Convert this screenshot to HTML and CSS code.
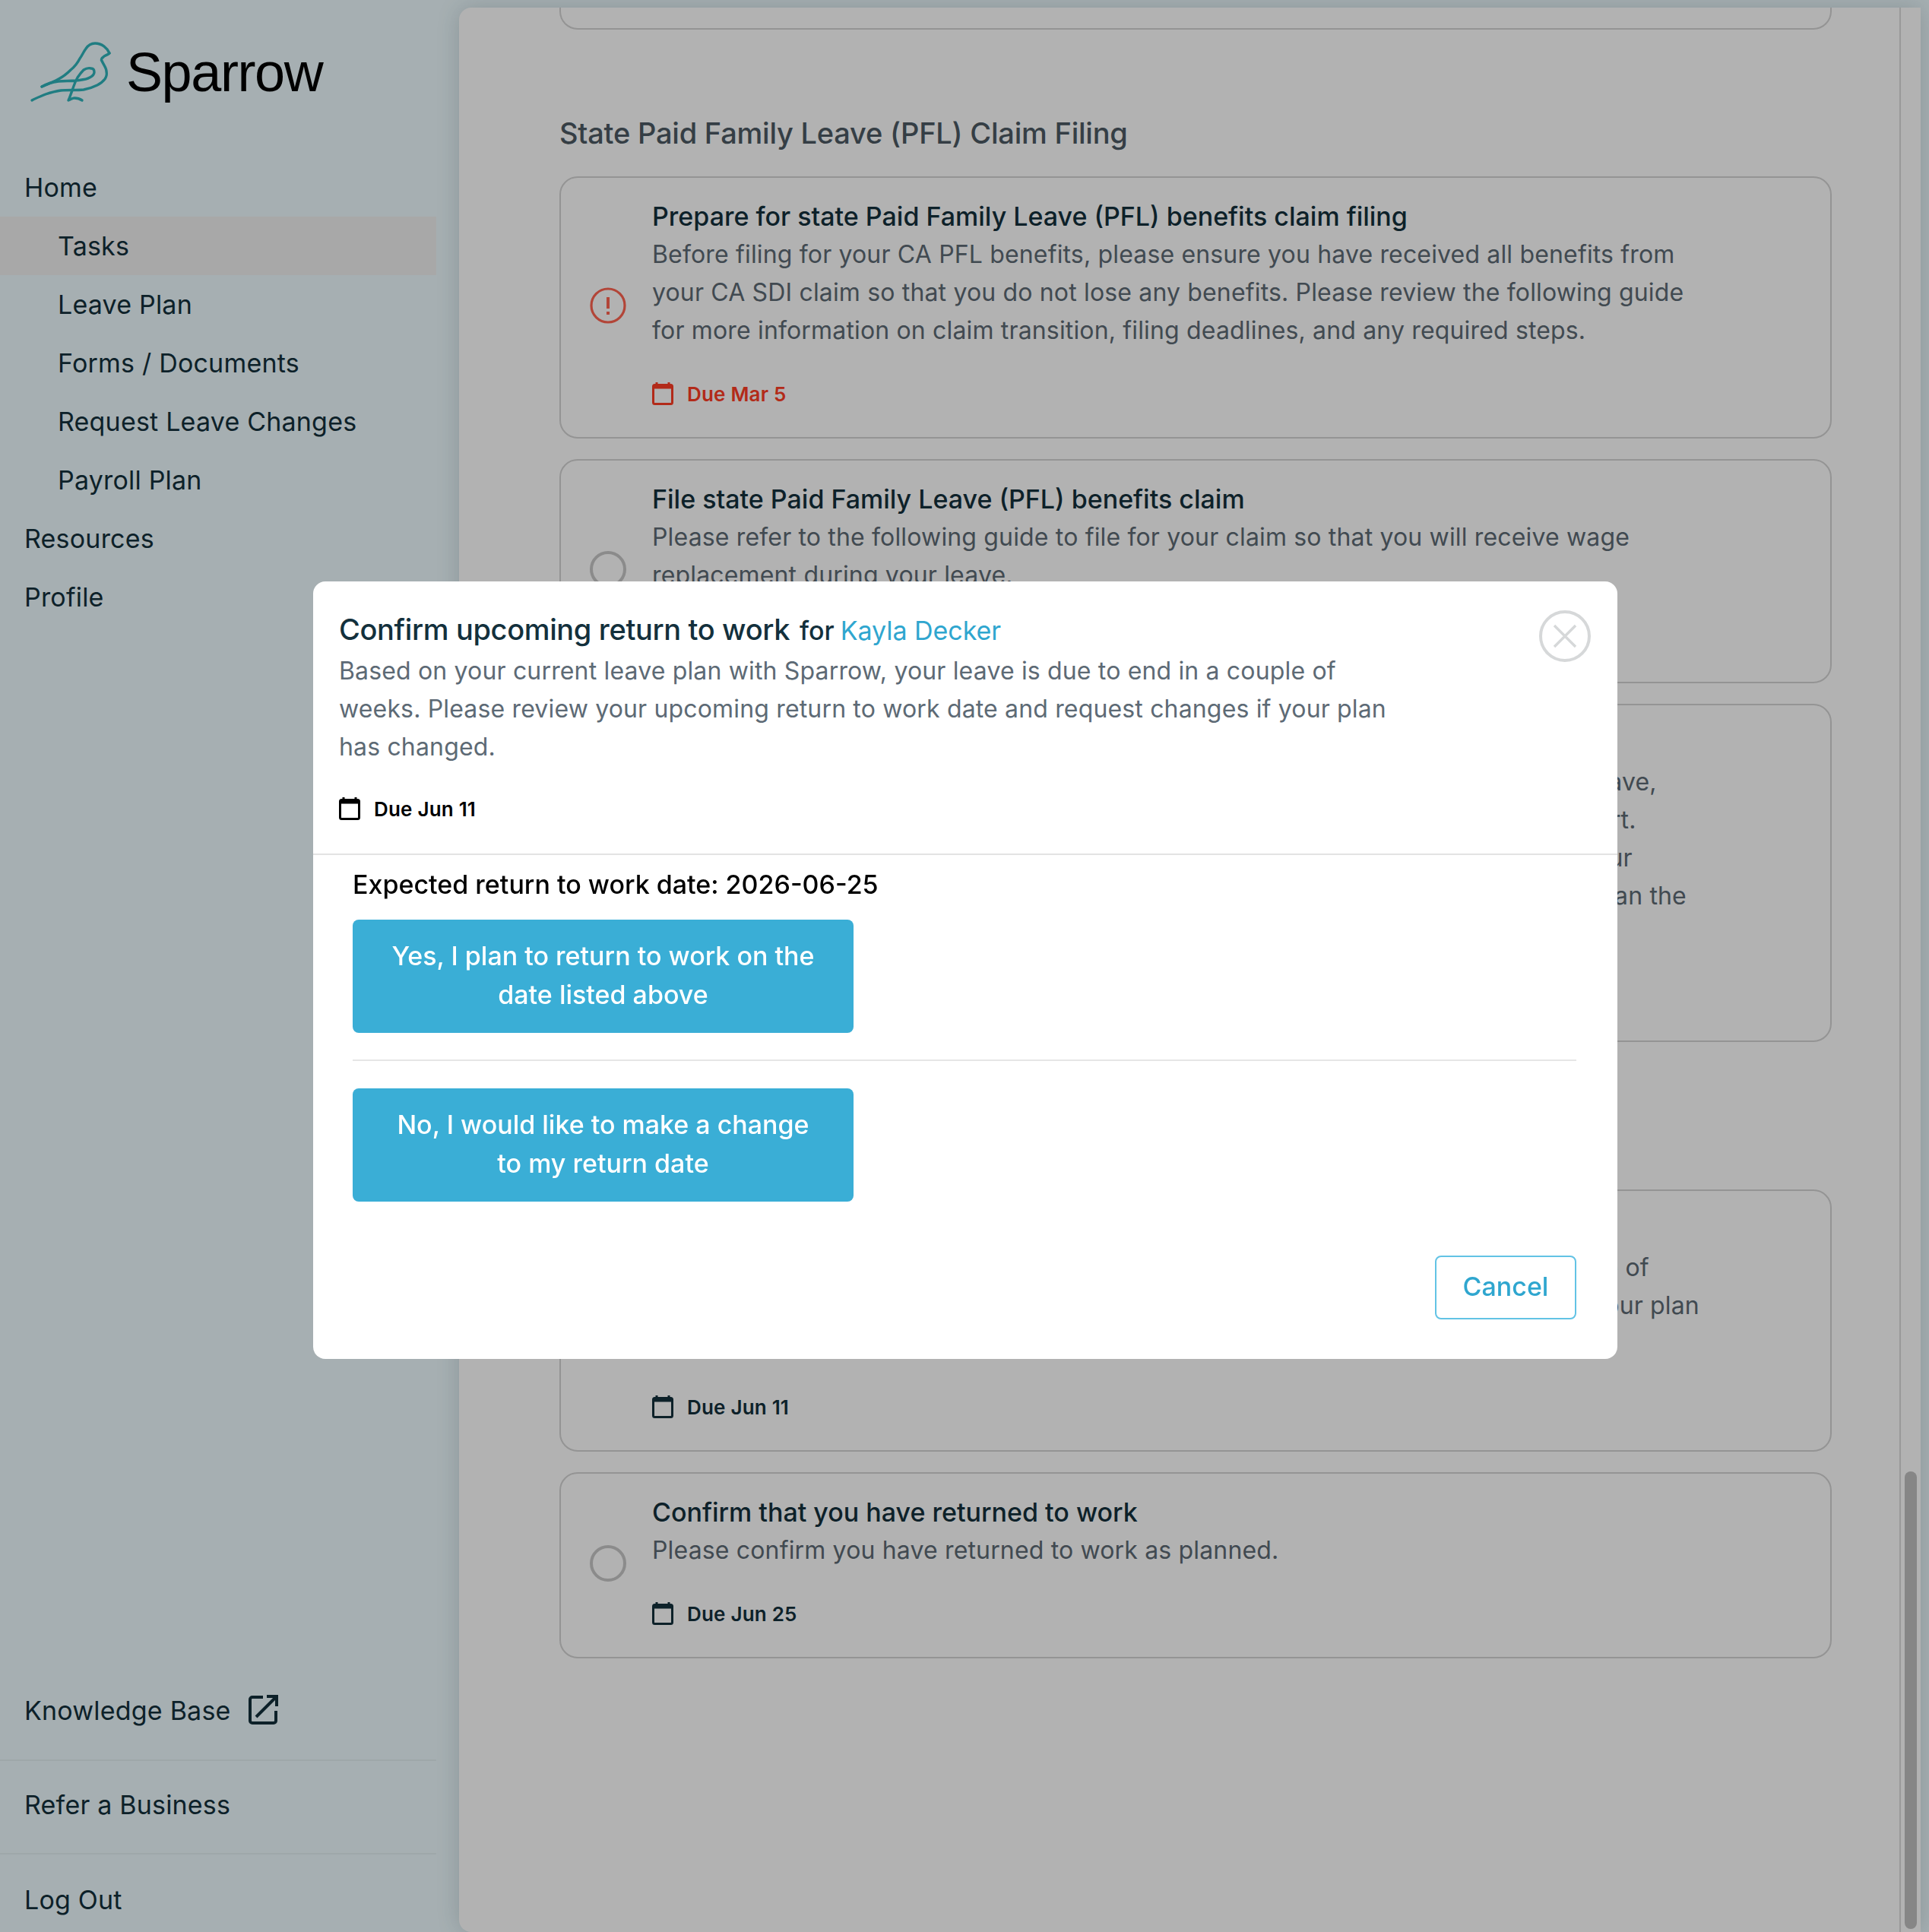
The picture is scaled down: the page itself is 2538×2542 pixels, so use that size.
FILE: index.html
```html
<!DOCTYPE html>
<html lang="en">
<head>
<meta charset="utf-8">
<title>Sparrow - Tasks</title>
<link rel="stylesheet" href="styles.css">
</head>
<body>
<div class="app">
  <aside class="sidebar">
    <div class="brand">
      <svg class="bird" viewBox="30 45 130 95" width="130" height="95" fill="none" stroke="#2fb3ba" stroke-width="3.4" stroke-linecap="round" stroke-linejoin="round">
        <path d="M144 68C141 61 134 55 125 55C118 55 115 59 113 62C110 66 108 71 105 75C102 81 98 86 93 90C88 95 83 99 77 102C70 106 62 109 55 112"/>
        <path d="M144 68C141 71 137 71 136 73C133 75 133 77 134 78C136 83 140 87 140 92C141 96 140 99 138 102C135 106 132 108 128 110C122 113 116 115 110 116C100 117 90 116 80 117C73 118 66 120 60 122C53 125 47 127 42 130"/>
        <path d="M55 112C62 108 69 106 77 105C85 104 92 105 100 104C107 103 113 103 118 100C122 98 124 96 124 93C124 90 123 88 120 88C116 87 113 88 110 90C106 94 104 97 102 100C99 105 97 111 95 117C93 122 92 126 90 130C93 129 95 127 98 127C102 127 105 128 108 130"/>
      </svg>
      <span class="brand-name">Sparrow</span>
    </div>
    <nav class="nav">
      <a class="nav-item">Home</a>
      <a class="nav-item sub active">Tasks</a>
      <a class="nav-item sub">Leave Plan</a>
      <a class="nav-item sub">Forms / Documents</a>
      <a class="nav-item sub">Request Leave Changes</a>
      <a class="nav-item sub">Payroll Plan</a>
      <a class="nav-item">Resources</a>
      <a class="nav-item">Profile</a>
    </nav>
    <div class="side-foot">
      <a class="foot-item">Knowledge Base
        <svg class="ext" viewBox="0 0 40 40" width="40" height="40" fill="none" stroke="#13303c" stroke-width="4">
          <path d="M20 3H6A3 3 0 0 0 3 6V34A3 3 0 0 0 6 37H34A3 3 0 0 0 37 34V21"/><path d="M11 29L37 3M25 2H38V15"/>
        </svg>
      </a>
      <a class="foot-item">Refer a Business</a>
      <a class="foot-item">Log Out</a>
    </div>
  </aside>

  <main class="panel">
    <div class="content">
      <div class="column">
        <div class="stub"></div>
        <h2 class="section">State Paid Family Leave (PFL) Claim Filing</h2>
        <div class="card">
          <svg class="status" viewBox="0 0 48 48" width="48" height="48" fill="none" stroke="#ff6451" stroke-width="3.2">
            <circle cx="24" cy="24" r="22"/><path d="M24 13V28M24 32V36" stroke-width="4"/>
          </svg>
          <div class="card-body">
            <h3 class="card-title">Prepare for state Paid Family Leave (PFL) benefits claim filing</h3>
            <p class="card-text">Before filing for your CA PFL benefits, please ensure you have received all benefits from<br>your CA SDI claim so that you do not lose any benefits. Please review the following guide<br>for more information on claim transition, filing deadlines, and any required steps.</p>
            <div class="due overdue">
              <svg class="cal" viewBox="0 0 28 30" width="28" height="30"><path d="M6 0V4M22 0V4" stroke="currentColor" stroke-width="3"/><rect x="1.5" y="3.5" width="25" height="25" rx="2" fill="none" stroke="currentColor" stroke-width="3"/><rect x="1.5" y="3.5" width="25" height="5" fill="currentColor"/></svg>
              Due Mar 5
            </div>
          </div>
        </div>
        <div class="card">
          <span class="status ring"></span>
          <div class="card-body">
            <h3 class="card-title">File state Paid Family Leave (PFL) benefits claim</h3>
            <p class="card-text">Please refer to the following guide to file for your claim so that you will receive wage<br>replacement during your leave.</p>
            <div class="due">
              <svg class="cal" viewBox="0 0 28 30" width="28" height="30"><path d="M6 0V4M22 0V4" stroke="currentColor" stroke-width="3"/><rect x="1.5" y="3.5" width="25" height="25" rx="2" fill="none" stroke="currentColor" stroke-width="3"/><rect x="1.5" y="3.5" width="25" height="5" fill="currentColor"/></svg>
              Due Mar 19
            </div>
          </div>
        </div>
        <div class="card">
          <span class="status ring"></span>
          <div class="card-body">
            <h3 class="card-title">Review your benefits during your leave</h3>
            <p class="card-text">While on leave, your benefits continue and you remain covered during approved leave,<br>including medical, dental, and vision plans. Please contact your HR team for support.<br>You may need to arrange for premium payments directly with your employer for your<br>your leave period and should confirm payment deadlines for any amount greater than the<br>amount deducted.</p>
            <div class="due">
              <svg class="cal" viewBox="0 0 28 30" width="28" height="30"><path d="M6 0V4M22 0V4" stroke="currentColor" stroke-width="3"/><rect x="1.5" y="3.5" width="25" height="25" rx="2" fill="none" stroke="currentColor" stroke-width="3"/><rect x="1.5" y="3.5" width="25" height="5" fill="currentColor"/></svg>
              Due Apr 2
            </div>
          </div>
        </div>
        <h2 class="section">Return to Work</h2>
        <div class="card">
          <span class="status ring"></span>
          <div class="card-body">
            <h3 class="card-title">Confirm upcoming return to work</h3>
            <p class="card-text">Based on your current leave plan with Sparrow, your leave is due to end in a couple of<br>weeks. Please review your upcoming return to work date and request changes if your plan<br>has changed.</p>
            <div class="due">
              <svg class="cal" viewBox="0 0 28 30" width="28" height="30"><path d="M6 0V4M22 0V4" stroke="currentColor" stroke-width="3"/><rect x="1.5" y="3.5" width="25" height="25" rx="2" fill="none" stroke="currentColor" stroke-width="3"/><rect x="1.5" y="3.5" width="25" height="5" fill="currentColor"/></svg>
              Due Jun 11
            </div>
          </div>
        </div>
        <div class="card">
          <span class="status ring"></span>
          <div class="card-body">
            <h3 class="card-title">Confirm that you have returned to work</h3>
            <p class="card-text">Please confirm you have returned to work as planned.</p>
            <div class="due">
              <svg class="cal" viewBox="0 0 28 30" width="28" height="30"><path d="M6 0V4M22 0V4" stroke="currentColor" stroke-width="3"/><rect x="1.5" y="3.5" width="25" height="25" rx="2" fill="none" stroke="currentColor" stroke-width="3"/><rect x="1.5" y="3.5" width="25" height="5" fill="currentColor"/></svg>
              Due Jun 25
            </div>
          </div>
        </div>
      </div>
    </div>
    <div class="track"><div class="thumb"></div></div>
  </main>
</div>

<div class="overlay">
  <section class="modal">
    <header class="modal-head">
      <div class="modal-intro">
        <div class="modal-heading"><span class="modal-title">Confirm upcoming return to work</span><span class="modal-for">for</span><a class="modal-name">Kayla Decker</a></div>
        <p class="card-text modal-text">Based on your current leave plan with Sparrow, your leave is due to end in a couple of<br>weeks. Please review your upcoming return to work date and request changes if your plan<br>has changed.</p>
        <div class="due modal-due">
          <svg class="cal" viewBox="0 0 28 30" width="28" height="30"><path d="M6 0V4M22 0V4" stroke="currentColor" stroke-width="3"/><rect x="1.5" y="3.5" width="25" height="25" rx="2" fill="none" stroke="currentColor" stroke-width="3"/><rect x="1.5" y="3.5" width="25" height="5" fill="currentColor"/></svg>
          Due Jun 11
        </div>
      </div>
      <button class="close" aria-label="Close">
        <svg viewBox="0 0 32 32" width="32" height="32" fill="none" stroke="#d6d8d9" stroke-width="3.4"><path d="M2 2L30 30M30 2L2 30"/></svg>
      </button>
    </header>
    <div class="modal-body">
      <p class="expected">Expected return to work date: 2026-06-25</p>
      <button class="choice">Yes, I plan to return to work on the<br>date listed above</button>
      <hr class="rule">
      <button class="choice">No, I would like to make a change<br>to my return date</button>
      <div class="modal-actions"><button class="cancel">Cancel</button></div>
    </div>
  </section>
</div>
</body>
</html>
```

FILE: styles.css
```css
* { box-sizing: border-box; }
html, body { margin: 0; height: 2542px; overflow: hidden; }
body { font-family: Inter, "Noto Sans", sans-serif; color: #13303c; background: #eefbff; }

.app { display: flex; height: 2542px; padding-right: 11px; background: #eefbff; }

.sidebar { width: 574px; margin-right: 30px; flex: none; display: flex; flex-direction: column; }
.brand { display: flex; align-items: center; height: 208px; padding: 0 0 28px 30px; }
.bird { display: block; margin-right: 6px; margin-top: 8px; }
.brand-name { font: 72px/1 "Liberation Sans", Arial, sans-serif; letter-spacing: -1.4px; color: #000; margin-top: 10px; }

.nav { display: flex; flex-direction: column; }
.nav-item { display: flex; align-items: center; height: 77px; padding-left: 32px; font-size: 34px; letter-spacing: .2px; }
.nav-item.sub { padding-left: 76px; }
.nav-item.active { background: #f1f1f1; }

.side-foot { margin-top: auto; display: flex; flex-direction: column; }
.foot-item { display: flex; align-items: center; gap: 22px; height: 123px; padding: 0 0 6px 32px; font-size: 34px; letter-spacing: .2px; border-top: 2px solid #e2eff3; }
.foot-item:first-child { height: 130px; padding-bottom: 0; border-top: 0; }
.foot-item:last-child { height: 104px; padding-top: 16px; padding-bottom: 0; }
.ext { display: block; }

.panel { flex: 1; display: flex; margin-top: 10px; background: #fff; border-radius: 16px 0 0 16px; box-shadow: 0 0 30px rgba(40, 70, 75, .2); min-width: 0; }
.content { flex: 1; min-width: 0; padding: 0 89px 0 132px; border-right: 2px solid #dcdcdc; overflow: hidden; }
.column { display: flex; flex-direction: column; }

.stub { height: 29px; border: 2px solid #d4d4d4; border-top: 0; border-radius: 0 0 24px 24px; }
.section { margin: 0; height: 193px; padding-top: 108px; font-size: 38px; letter-spacing: -.22px; line-height: 56px; font-weight: 500; color: #4d5a63; }

.card { display: flex; align-items: center; padding: 26px 40px 37px 38px; margin-bottom: 27px; border: 2px solid #d4d4d4; border-radius: 24px; }
.card:has(+ .section) { margin-bottom: 1px; }
.status { flex: none; display: block; width: 48px; height: 48px; margin: 6px 34px 0 0; }
.ring { border: 4px solid #c8c8c8; border-radius: 50%; }
.card-body { min-width: 0; }
.card-title { margin: 0; font-size: 34px; line-height: 50px; font-weight: 500; color: #13303c; }
.card-text { margin: 0; font-size: 32px; letter-spacing: .16px; line-height: 50px; color: #5d6a75; white-space: nowrap; }
.due { display: flex; align-items: center; gap: 18px; height: 40px; margin-top: 38px; font-size: 26px; letter-spacing: .2px; font-weight: 600; color: #13303c; }
.due.overdue { color: #ff3d24; }
.cal { display: block; flex: none; }

.track { flex: none; width: 26px; padding: 1926px 5px 0; }
.thumb { width: 16px; height: 602px; border-radius: 8px; background: #c0c0c0; }

.overlay { position: fixed; inset: 0; display: flex; background: rgba(0, 0, 0, .3); padding: 765px 410px 0 412px; }
.modal { width: 1716px; height: 1023px; display: flex; flex-direction: column; background: #fff; border-radius: 16px; }
.modal-head { display: flex; justify-content: space-between; height: 360px; padding: 40px 35px 0 34px; border-bottom: 2px solid #e3e3e3; }
.modal-heading { display: flex; align-items: baseline; height: 50px; }
.modal-title { font-size: 38px; letter-spacing: -.36px; font-weight: 500; color: #13303c; }
.modal-for { margin-left: 13px; font-size: 34px; font-weight: 500; color: #13303c; }
.modal-name { margin-left: 8px; font-size: 34px; letter-spacing: -.05px; color: #2fa6cf; }
.modal-text { margin-top: 3px; }
.modal-due { color: #000; margin-top: 36px; }
.close { flex: none; width: 68px; height: 68px; margin-top: -2px; padding: 0; display: flex; align-items: center; justify-content: center; background: #fff; border: 4px solid #d6d8d9; border-radius: 50%; }

.modal-body { flex: 1; padding: 14px 54px 0 52px; display: flex; flex-direction: column; align-items: flex-start; }
.expected { margin: 0 0 21px; font-size: 34px; line-height: 50px; font-weight: 500; color: #000; }
.choice { width: 659px; height: 149px; padding: 0 0 4px; border: 0; border-radius: 8px; background: #3aaed6; color: #fff; font: 500 34px/51px Inter, sans-serif; }
.rule { align-self: stretch; width: 100%; margin: 35px 0 36px; border: 0; border-top: 2px solid #e6e6e6; }
.modal-actions { align-self: stretch; display: flex; justify-content: flex-end; margin-top: 71px; }
.cancel { width: 186px; height: 84px; padding: 0 0 3px; background: #fff; border: 2px solid #62c3e5; border-radius: 8px; color: #2fa6cf; font: 500 34px Inter, sans-serif; }
```
